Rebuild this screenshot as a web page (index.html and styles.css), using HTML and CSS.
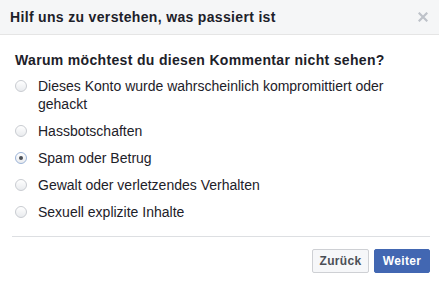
FILE: index.html
```html
<!DOCTYPE html>
<html lang="de">
<head>
<meta charset="utf-8">
<link rel="stylesheet" href="styles.css">
</head>
<body>
<div class="dialog">
  <div class="header">
    <span class="title">Hilf uns zu verstehen, was passiert ist</span>
    <svg class="close" width="10" height="10" viewBox="0 0 10 10"><path d="M1.5 1.5 L8.5 8.5 M8.5 1.5 L1.5 8.5" stroke="#bec2c9" stroke-width="2.2" stroke-linecap="square"/></svg>
  </div>
  <div class="body">
    <div class="question">Warum möchtest du diesen Kommentar nicht sehen?</div>
    <ul class="options">
      <li class="option"><span class="radio"></span><span class="label">Dieses Konto wurde wahrscheinlich kompromittiert oder gehackt</span></li>
      <li class="option"><span class="radio"></span><span class="label">Hassbotschaften</span></li>
      <li class="option"><span class="radio checked"></span><span class="label">Spam oder Betrug</span></li>
      <li class="option"><span class="radio"></span><span class="label">Gewalt oder verletzendes Verhalten</span></li>
      <li class="option"><span class="radio"></span><span class="label">Sexuell explizite Inhalte</span></li>
    </ul>
  </div>
  <div class="footer">
    <button class="btn btn-back">Zurück</button>
    <button class="btn btn-next">Weiter</button>
  </div>
</div>
</body>
</html>
```
FILE: styles.css
```css
* { box-sizing: border-box; }
html, body { margin: 0; padding: 0; background: #fff; }
body { font-family: "Liberation Sans", Arial, sans-serif; color: #1d2129; width: 439px; height: 283px; overflow: hidden; }
.dialog { width: 439px; }
.header {
  height: 35px;
  background: #f5f6f7;
  border-bottom: 1px solid #e5e5e5;
  display: flex;
  align-items: center;
  justify-content: space-between;
  padding: 0 11px 0 10px;
}
.title { font-size: 14px; font-weight: bold; color: #1d2129; letter-spacing: 0.33px; }
.close { display: block; }
.body { padding: 16px 12px 0 15px; }
.question { font-size: 14px; font-weight: bold; line-height: 18px; margin-bottom: 8px; letter-spacing: 0.33px; }
.options { list-style: none; margin: 0; padding: 0; }
.option { display: flex; align-items: flex-start; font-size: 14px; line-height: 18px; margin-bottom: 9px; }
.radio {
  flex: none;
  width: 12px; height: 12px;
  margin-top: 3px;
  margin-right: 11px;
  border-radius: 50%;
  border: 1px solid #c9ccd1;
  background: linear-gradient(#ffffff, #e9ebee);
  position: relative;
}
.radio.checked { border-color: #9cb4d8; }
.radio.checked::after {
  content: "";
  position: absolute;
  left: 3px; top: 3px;
  width: 4px; height: 4px;
  border-radius: 50%;
  background: #4b4f56;
}
.label { color: #1d2129; }
.footer {
  margin: 15px 9px 0 12px;
  border-top: 1px solid #dddfe2;
  padding-top: 12px;
  display: flex;
  justify-content: flex-end;
  gap: 5px;
}
.btn {
  font-family: "Liberation Sans", Arial, sans-serif;
  font-size: 12px;
  font-weight: bold;
  height: 24px;
  padding: 0 6px;
  border-radius: 2px;
  border: 1px solid;
  line-height: 22px;
  letter-spacing: 0.3px;
}
.btn-back { background: #f6f7f9; border-color: #ced0d4; color: #4b4f56; width: 57px; }
.btn-next { background: #4267b2; border-color: #4267b2; color: #fff; width: 56px; }
```
